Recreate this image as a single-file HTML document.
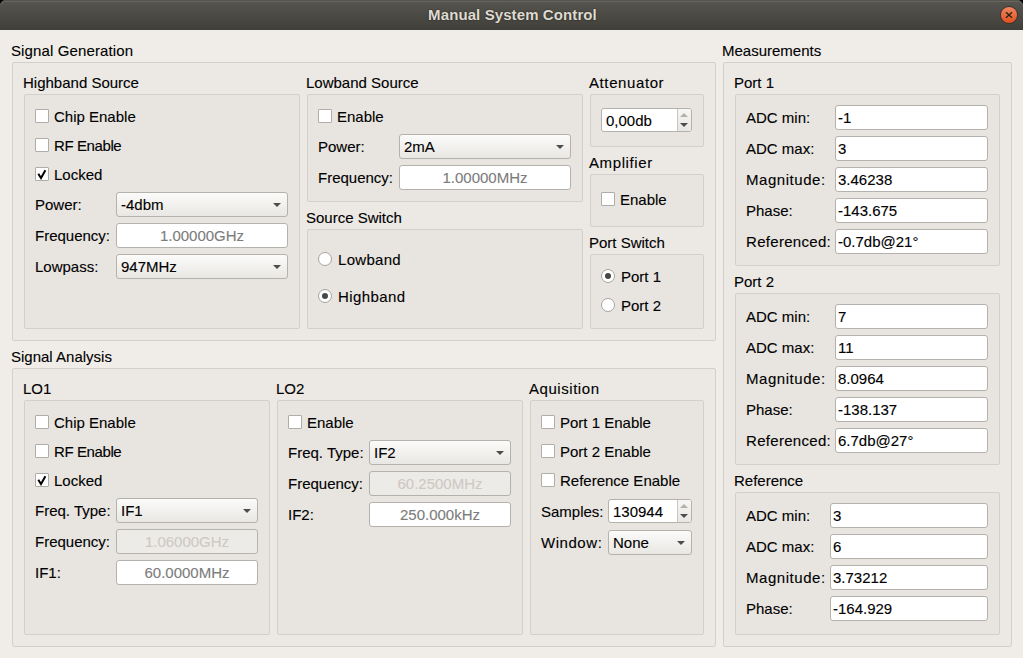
<!DOCTYPE html>
<html><head><meta charset="utf-8"><title>Manual System Control</title><style>
html,body{margin:0;padding:0;width:1023px;height:658px;overflow:hidden;background:#f0ede9;}
body{position:relative;font-family:"Liberation Sans",sans-serif;font-size:15px;color:#000000;}
#tb{position:absolute;left:0;top:0;width:1023px;height:30px;background:linear-gradient(#57554f,#403f3a);border-radius:6px 6px 0 0;box-shadow:inset 0 1px 0 #55544e,inset 0 2px 0 #67655d;border-bottom:0;}
#wrap{position:absolute;left:0;top:0;width:1023px;height:658px;background:#000;}
#tt{position:absolute;left:1px;top:6px;letter-spacing:0.1px;width:1023px;text-align:center;font-weight:bold;font-size:15px;line-height:17px;color:#dfdbd2;text-shadow:0 0 1.5px rgba(20,20,15,0.9);}
#cl{position:absolute;left:999px;top:5px;}
#body{position:absolute;left:0;top:30px;width:1023px;height:628px;background:#f0ede9;border-top:0;}
.fr{position:absolute;border:1px solid #d3cfcb;border-radius:2px;}
.t{position:absolute;white-space:nowrap;line-height:17px;-webkit-text-stroke:0.12px currentColor;}
.cb{position:absolute;width:12px;height:12px;border:1px solid #b0aca8;background:#fff;border-radius:1px;}
.cb svg{left:-1px!important;top:-1px!important}
.rb{position:absolute;width:12px;height:12px;border:1px solid #a8a4a0;background:#fff;border-radius:50%;}
.rd{position:absolute;left:3px;top:3px;width:6px;height:6px;border-radius:50%;background:#474747;}
.cmb{position:absolute;border:1px solid #b5b1ac;border-radius:3px;background:linear-gradient(#fbfbfa,#e9e7e3);}
.arr{position:absolute;width:0;height:0;border-left:4px solid transparent;border-right:4px solid transparent;border-top:4px solid #4d4d4d;}
.ed{position:absolute;border:1px solid #b5b1ac;border-radius:3px;background:#fff;}
.ed.dis{background:#edebe8;}
.spb{position:absolute;top:0;border-left:1px solid #c9c5bf;background:linear-gradient(#f7f6f4,#e9e7e3);border-radius:0 2px 2px 0;}
.up{position:absolute;left:2px;top:4px;width:0;height:0;border-left:4px solid transparent;border-right:4px solid transparent;border-bottom:4px solid #b4b1ac;}
.dn{position:absolute;left:2px;top:14px;width:0;height:0;border-left:4px solid transparent;border-right:4px solid transparent;border-top:4px solid #4d4d4d;}
</style></head>
<body><div id="wrap"></div><div id="body"></div>
<div id="tb"><div id="tt">Manual System Control</div><svg id="cl" width="20" height="20" viewBox="0 0 20 20"><defs><linearGradient id="cg" x1="0" y1="0" x2="0" y2="1"><stop offset="0" stop-color="#f08562"/><stop offset="1" stop-color="#e2501c"/></linearGradient></defs><circle cx="10" cy="10" r="9" fill="#34332f"/><circle cx="10" cy="10" r="8.1" fill="url(#cg)"/><path d="M7 7.2 L13 12.8 M13 7.2 L7 12.8" stroke="#1c2414" stroke-width="1.3"/></svg></div>
<div class="t" style="left:11px;top:42px;letter-spacing:0.12px;">Signal Generation</div>
<div class="fr" style="left:12px;top:62px;width:702px;height:277px;background:#ece9e5"></div>
<div class="t" style="left:23px;top:74px;">Highband Source</div>
<div class="fr" style="left:24px;top:94px;width:274px;height:233px;background:#e8e5e1"></div>
<div class="cb" style="left:35px;top:109px"></div>
<div class="t" style="left:54px;top:108px;">Chip Enable</div>
<div class="cb" style="left:35px;top:138px"></div>
<div class="t" style="left:54px;top:137px;letter-spacing:-0.4px;">RF Enable</div>
<div class="cb" style="left:35px;top:167px"><svg width="14" height="14" style="position:absolute;left:0;top:0"><path d="M3.3 6.8 L6 11 L10.4 3.3" stroke="#000" stroke-width="2" fill="none"/></svg></div>
<div class="t" style="left:54px;top:166px;">Locked</div>
<div class="t" style="left:35px;top:196px;">Power:</div>
<div class="cmb" style="left:116px;top:192px;width:170px;height:23px"><div class="t" style="left:4px;top:3px">-4dbm</div><div class="arr" style="left:156px;top:10px"></div></div>
<div class="t" style="left:35px;top:227px;">Frequency:</div>
<div class="ed" style="left:116px;top:223px;width:170px;height:23px"><div class="t" style="left:0;width:170px;text-align:center;top:3px;color:#7c7c7c;">1.00000GHz</div></div>
<div class="t" style="left:35px;top:258px;">Lowpass:</div>
<div class="cmb" style="left:116px;top:254px;width:170px;height:23px"><div class="t" style="left:4px;top:3px">947MHz</div><div class="arr" style="left:156px;top:10px"></div></div>
<div class="t" style="left:306px;top:74px;">Lowband Source</div>
<div class="fr" style="left:307px;top:94px;width:274px;height:106px;background:#e8e5e1"></div>
<div class="cb" style="left:318px;top:109px"></div>
<div class="t" style="left:337px;top:108px;">Enable</div>
<div class="t" style="left:318px;top:138px;">Power:</div>
<div class="cmb" style="left:399px;top:134px;width:170px;height:23px"><div class="t" style="left:4px;top:3px">2mA</div><div class="arr" style="left:156px;top:10px"></div></div>
<div class="t" style="left:318px;top:169px;">Frequency:</div>
<div class="ed" style="left:399px;top:165px;width:170px;height:23px"><div class="t" style="left:0;width:170px;text-align:center;top:3px;color:#7c7c7c;">1.00000MHz</div></div>
<div class="t" style="left:306px;top:209px;">Source Switch</div>
<div class="fr" style="left:307px;top:229px;width:274px;height:98px;background:#e8e5e1"></div>
<div class="rb" style="left:318px;top:252px"></div>
<div class="t" style="left:338px;top:251px;letter-spacing:0.3px;">Lowband</div>
<div class="rb" style="left:318px;top:289px"><div class="rd"></div></div>
<div class="t" style="left:338px;top:288px;letter-spacing:0.4px;">Highband</div>
<div class="t" style="left:589px;top:74px;letter-spacing:0.6px;">Attenuator</div>
<div class="fr" style="left:590px;top:94px;width:112px;height:51px;background:#e8e5e1"></div>
<div class="ed" style="left:601px;top:108px;width:89px;height:22px"><div class="t" style="left:4px;top:3px">0,00db</div><div class="spb" style="left:75px;width:13px;height:22px"><div class="up"></div><div class="dn"></div></div></div>
<div class="t" style="left:589px;top:154px;letter-spacing:0.6px;">Amplifier</div>
<div class="fr" style="left:590px;top:174px;width:112px;height:51px;background:#e8e5e1"></div>
<div class="cb" style="left:601px;top:192px"></div>
<div class="t" style="left:620px;top:191px;">Enable</div>
<div class="t" style="left:589px;top:234px;">Port Switch</div>
<div class="fr" style="left:590px;top:254px;width:112px;height:73px;background:#e8e5e1"></div>
<div class="rb" style="left:601px;top:269px"><div class="rd"></div></div>
<div class="t" style="left:621px;top:268px;">Port 1</div>
<div class="rb" style="left:601px;top:298px"></div>
<div class="t" style="left:621px;top:297px;">Port 2</div>
<div class="t" style="left:722px;top:42px;">Measurements</div>
<div class="fr" style="left:723px;top:62px;width:287px;height:583px;background:#ece9e5"></div>
<div class="t" style="left:734px;top:74px;">Port 1</div>
<div class="fr" style="left:735px;top:94px;width:263px;height:170px;background:#e8e5e1"></div>
<div class="t" style="left:746px;top:109px;">ADC min:</div>
<div class="ed" style="left:835px;top:105px;width:151px;height:23px"><div class="t" style="left:2px;top:3px;">-1</div></div>
<div class="t" style="left:746px;top:140px;">ADC max:</div>
<div class="ed" style="left:835px;top:136px;width:151px;height:23px"><div class="t" style="left:2px;top:3px;">3</div></div>
<div class="t" style="left:746px;top:171px;letter-spacing:0.55px;">Magnitude:</div>
<div class="ed" style="left:835px;top:167px;width:151px;height:23px"><div class="t" style="left:2px;top:3px;">3.46238</div></div>
<div class="t" style="left:746px;top:202px;">Phase:</div>
<div class="ed" style="left:835px;top:198px;width:151px;height:23px"><div class="t" style="left:2px;top:3px;">-143.675</div></div>
<div class="t" style="left:746px;top:233px;letter-spacing:0.3px;">Referenced:</div>
<div class="ed" style="left:835px;top:229px;width:151px;height:23px"><div class="t" style="left:2px;top:3px;">-0.7db@21°</div></div>
<div class="t" style="left:734px;top:273px;">Port 2</div>
<div class="fr" style="left:735px;top:293px;width:263px;height:170px;background:#e8e5e1"></div>
<div class="t" style="left:746px;top:308px;">ADC min:</div>
<div class="ed" style="left:835px;top:304px;width:151px;height:23px"><div class="t" style="left:2px;top:3px;">7</div></div>
<div class="t" style="left:746px;top:339px;">ADC max:</div>
<div class="ed" style="left:835px;top:335px;width:151px;height:23px"><div class="t" style="left:2px;top:3px;">11</div></div>
<div class="t" style="left:746px;top:370px;letter-spacing:0.55px;">Magnitude:</div>
<div class="ed" style="left:835px;top:366px;width:151px;height:23px"><div class="t" style="left:2px;top:3px;">8.0964</div></div>
<div class="t" style="left:746px;top:401px;">Phase:</div>
<div class="ed" style="left:835px;top:397px;width:151px;height:23px"><div class="t" style="left:2px;top:3px;">-138.137</div></div>
<div class="t" style="left:746px;top:432px;letter-spacing:0.3px;">Referenced:</div>
<div class="ed" style="left:835px;top:428px;width:151px;height:23px"><div class="t" style="left:2px;top:3px;">6.7db@27°</div></div>
<div class="t" style="left:734px;top:472px;">Reference</div>
<div class="fr" style="left:735px;top:492px;width:263px;height:141px;background:#e8e5e1"></div>
<div class="t" style="left:746px;top:507px;">ADC min:</div>
<div class="ed" style="left:830px;top:503px;width:156px;height:23px"><div class="t" style="left:2px;top:3px;">3</div></div>
<div class="t" style="left:746px;top:538px;">ADC max:</div>
<div class="ed" style="left:830px;top:534px;width:156px;height:23px"><div class="t" style="left:2px;top:3px;">6</div></div>
<div class="t" style="left:746px;top:569px;letter-spacing:0.55px;">Magnitude:</div>
<div class="ed" style="left:830px;top:565px;width:156px;height:23px"><div class="t" style="left:2px;top:3px;">3.73212</div></div>
<div class="t" style="left:746px;top:600px;">Phase:</div>
<div class="ed" style="left:830px;top:596px;width:156px;height:23px"><div class="t" style="left:2px;top:3px;">-164.929</div></div>
<div class="t" style="left:11px;top:348px;">Signal Analysis</div>
<div class="fr" style="left:12px;top:368px;width:702px;height:277px;background:#ece9e5"></div>
<div class="t" style="left:23px;top:380px;">LO1</div>
<div class="fr" style="left:24px;top:400px;width:244px;height:233px;background:#e8e5e1"></div>
<div class="cb" style="left:35px;top:415px"></div>
<div class="t" style="left:54px;top:414px;">Chip Enable</div>
<div class="cb" style="left:35px;top:444px"></div>
<div class="t" style="left:54px;top:443px;letter-spacing:-0.4px;">RF Enable</div>
<div class="cb" style="left:35px;top:473px"><svg width="14" height="14" style="position:absolute;left:0;top:0"><path d="M3.3 6.8 L6 11 L10.4 3.3" stroke="#000" stroke-width="2" fill="none"/></svg></div>
<div class="t" style="left:54px;top:472px;">Locked</div>
<div class="t" style="left:35px;top:502px;">Freq. Type:</div>
<div class="cmb" style="left:116px;top:498px;width:140px;height:23px"><div class="t" style="left:4px;top:3px">IF1</div><div class="arr" style="left:126px;top:10px"></div></div>
<div class="t" style="left:35px;top:533px;">Frequency:</div>
<div class="ed dis" style="left:116px;top:529px;width:140px;height:23px"><div class="t" style="left:0;width:140px;text-align:center;top:3px;color:#cdc9c4;">1.06000GHz</div></div>
<div class="t" style="left:35px;top:564px;">IF1:</div>
<div class="ed" style="left:116px;top:560px;width:140px;height:23px"><div class="t" style="left:0;width:140px;text-align:center;top:3px;color:#7c7c7c;">60.0000MHz</div></div>
<div class="t" style="left:276px;top:380px;">LO2</div>
<div class="fr" style="left:277px;top:400px;width:244px;height:233px;background:#e8e5e1"></div>
<div class="cb" style="left:288px;top:415px"></div>
<div class="t" style="left:307px;top:414px;">Enable</div>
<div class="t" style="left:288px;top:444px;">Freq. Type:</div>
<div class="cmb" style="left:369px;top:440px;width:140px;height:23px"><div class="t" style="left:4px;top:3px">IF2</div><div class="arr" style="left:126px;top:10px"></div></div>
<div class="t" style="left:288px;top:475px;">Frequency:</div>
<div class="ed dis" style="left:369px;top:471px;width:140px;height:23px"><div class="t" style="left:0;width:140px;text-align:center;top:3px;color:#cdc9c4;">60.2500MHz</div></div>
<div class="t" style="left:288px;top:506px;">IF2:</div>
<div class="ed" style="left:369px;top:502px;width:140px;height:23px"><div class="t" style="left:0;width:140px;text-align:center;top:3px;color:#7c7c7c;">250.000kHz</div></div>
<div class="t" style="left:529px;top:380px;letter-spacing:0.55px;">Aquisition</div>
<div class="fr" style="left:530px;top:400px;width:172px;height:233px;background:#e8e5e1"></div>
<div class="cb" style="left:541px;top:415px"></div>
<div class="t" style="left:560px;top:414px;">Port 1 Enable</div>
<div class="cb" style="left:541px;top:444px"></div>
<div class="t" style="left:560px;top:443px;">Port 2 Enable</div>
<div class="cb" style="left:541px;top:473px"></div>
<div class="t" style="left:560px;top:472px;">Reference Enable</div>
<div class="t" style="left:541px;top:503px;">Samples:</div>
<div class="ed" style="left:608px;top:499px;width:82px;height:22px"><div class="t" style="left:4px;top:3px">130944</div><div class="spb" style="left:68px;width:13px;height:22px"><div class="up"></div><div class="dn"></div></div></div>
<div class="t" style="left:541px;top:534px;letter-spacing:0.55px;">Window:</div>
<div class="cmb" style="left:608px;top:530px;width:82px;height:23px"><div class="t" style="left:4px;top:3px">None</div><div class="arr" style="left:68px;top:10px"></div></div>
</body></html>
